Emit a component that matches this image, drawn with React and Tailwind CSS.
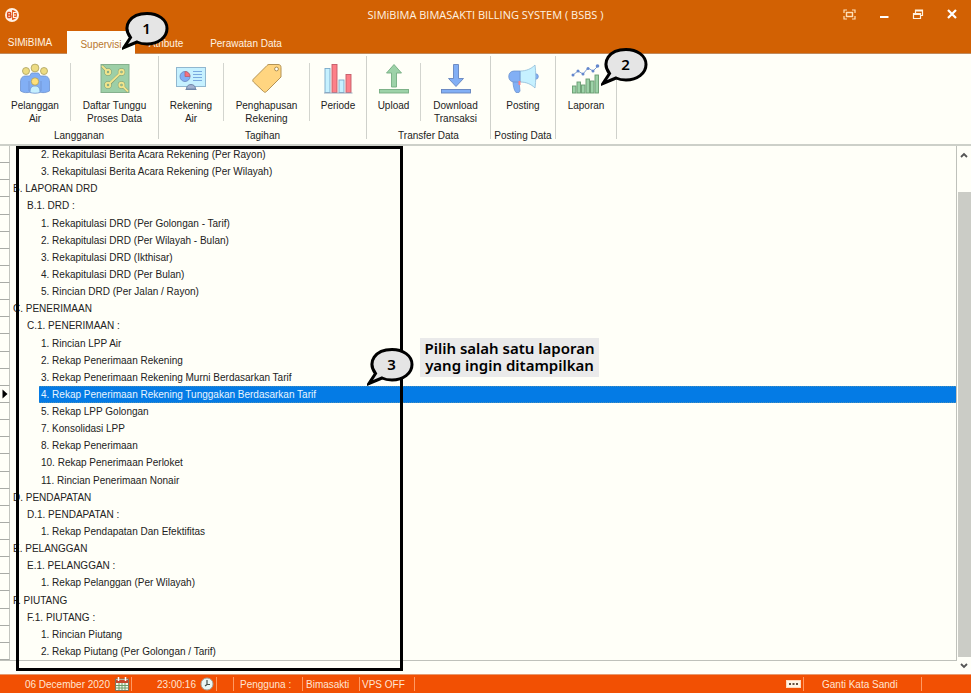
import { useState } from "react";

const TREE = [
  [2, "2. Rekapitulasi Berita Acara Rekening (Per Rayon)"],
  [2, "3. Rekapitulasi Berita Acara Rekening (Per Wilayah)"],
  [0, "B. LAPORAN DRD"],
  [1, "B.1. DRD :"],
  [2, "1. Rekapitulasi DRD (Per Golongan - Tarif)"],
  [2, "2. Rekapitulasi DRD (Per Wilayah - Bulan)"],
  [2, "3. Rekapitulasi DRD (Ikthisar)"],
  [2, "4. Rekapitulasi DRD (Per Bulan)"],
  [2, "5. Rincian DRD (Per Jalan / Rayon)"],
  [0, "C. PENERIMAAN"],
  [1, "C.1. PENERIMAAN :"],
  [2, "1. Rincian LPP Air"],
  [2, "2. Rekap Penerimaan Rekening"],
  [2, "3. Rekap Penerimaan Rekening Murni Berdasarkan Tarif"],
  [2, "4. Rekap Penerimaan Rekening Tunggakan Berdasarkan Tarif"],
  [2, "5. Rekap LPP Golongan"],
  [2, "7. Konsolidasi LPP"],
  [2, "8. Rekap Penerimaan"],
  [2, "10. Rekap Penerimaan Perloket"],
  [2, "11. Rincian Penerimaan Nonair"],
  [0, "D. PENDAPATAN"],
  [1, "D.1. PENDAPATAN :"],
  [2, "1. Rekap Pendapatan Dan Efektifitas"],
  [0, "E. PELANGGAN"],
  [1, "E.1. PELANGGAN :"],
  [2, "1. Rekap Pelanggan (Per Wilayah)"],
  [0, "F. PIUTANG"],
  [1, "F.1. PIUTANG :"],
  [2, "1. Rincian Piutang"],
  [2, "2. Rekap Piutang (Per Golongan / Tarif)"],
];

const INDENT = ["pl-[1px]", "pl-[15px]", "pl-[29px]"];

function PeopleIcon() {
  return (
    <svg width="32" height="32" viewBox="0 0 32 32" stroke="#6f93cf" strokeWidth="0.8">
      <path d="M1.500 28V19c0-4 2-6 5-6h4l2-3h7l2 3h4c3 0 5 2 5 6v9c-4 2-7 2-10 1H11.500c-3 1-7 1-10-1z" fill="#82aff5" />
      <path d="M10 28V18M22 28V18" fill="none" />
      <path d="M11 29.500c0-4 1-6.500 5-6.500s5 2.500 5 6.500c-3 1-7 1-10 0z" fill="#c5efff" />
      <g fill="#eddc83" stroke="#a9a05f">
        <circle cx="7" cy="8" r="3.500" />
        <circle cx="25" cy="8" r="3.500" />
        <circle cx="16" cy="5" r="3.900" />
        <circle cx="16" cy="18.500" r="3.700" fill="#ffe07a" />
      </g>
    </svg>
  );
}

function CircuitIcon() {
  return (
    <svg width="32" height="32" viewBox="0 0 32 32" fill="none">
      <rect x="2" y="1.500" width="28" height="28" fill="#9dcfa7" stroke="#85b08d" />
      <g stroke="#7d9a72" strokeWidth="3">
        <path d="M3 3l5 5M11 20.500L21 10.500M24.500 24l4.500 4.500" />
      </g>
      <g stroke="#7d9a72" strokeWidth="3">
        <circle cx="9" cy="9" r="2.200" /><circle cx="22.500" cy="9" r="2.200" />
        <circle cx="9" cy="22" r="2.200" /><circle cx="22.500" cy="22" r="2.200" />
      </g>
      <g stroke="#f0e58d" strokeWidth="2">
        <path d="M3 3l5 5M10.500 20.500L21 10.500M24 23.500l5 5" />
        <circle cx="9" cy="9" r="2.200" /><circle cx="22.500" cy="9" r="2.200" />
        <circle cx="9" cy="22" r="2.200" /><circle cx="22.500" cy="22" r="2.200" />
      </g>
    </svg>
  );
}

function BillIcon() {
  return (
    <svg width="32" height="32" viewBox="0 0 32 32" fill="none">
      <rect x="1.500" y="4.500" width="29" height="19" fill="#c6f1ff" stroke="#91b7cf" />
      <circle cx="10" cy="13.500" r="5" fill="#82aff5" stroke="#6584bd" strokeWidth="0.800" />
      <path d="M10 13.500v-5a5 5 0 0 1 5 5z" fill="#f86f7c" stroke="#b8606d" strokeWidth="0.800" />
      <path d="M18 8.500h9M18 11.500h9M18 14.500h9M18 17.500h9" stroke="#79a9df" />
      <path d="M10.500 26.500h11M11.500 26c0-3 2-4.500 4.500-4.500s4.500 1.500 4.500 4.500z" fill="#a2b2d0" stroke="#7188aa" />
    </svg>
  );
}

function TagIcon() {
  return (
    <svg width="32" height="32" viewBox="0 0 32 32">
      <path d="M18 1.500h9c2 0 3 1 3 3V14L15.500 28.500c-1 1-2 1-3 0L2.500 19c-1-1-1-2 0-3L16 2.500c.6-.7 1-1 2-1z" fill="#ffd580" stroke="#b39355" />
      <circle cx="25.500" cy="6" r="1.900" fill="#fffff8" stroke="#a98d54" />
    </svg>
  );
}

function PeriodIcon() {
  return (
    <svg width="32" height="32" viewBox="0 0 32 32" strokeWidth="0.900">
      <g fill="#c6f1ff" stroke="#79a9c9">
        <rect x="3" y="5.500" width="5" height="24" />
        <rect x="17" y="17" width="5" height="12.500" />
      </g>
      <g fill="#fd8088" stroke="#c45b68">
        <rect x="10" y="1.500" width="5" height="28" />
        <rect x="24" y="11.500" width="5" height="18" />
      </g>
      <path d="M2 30h28.500" stroke="#8ea0b8" />
    </svg>
  );
}

function UploadIcon() {
  return (
    <svg width="32" height="32" viewBox="0 0 32 32" fill="#9dd2a8" stroke="#75ad82" strokeWidth="0.900">
      <path d="M16 1.500L23.500 10h-5v14h-5V10h-5z" />
      <rect x="1.500" y="26.500" width="29" height="3.500" />
    </svg>
  );
}

function DownloadIcon() {
  return (
    <svg width="32" height="32" viewBox="0 0 32 32" fill="#82aff5" stroke="#6584bd" strokeWidth="0.900">
      <path d="M16 23.500l7.500-8h-5V1.500h-5v14h-5z" />
      <rect x="1.500" y="26.500" width="29" height="3.500" />
    </svg>
  );
}

function MegaphoneIcon() {
  return (
    <svg width="32" height="32" viewBox="0 0 32 32" strokeWidth="0.800">
      <circle cx="28.500" cy="13.500" r="2.800" fill="#82aff5" stroke="#6d94cf" />
      <path d="M13 8c6 0 11-2 15-6 1 7 1 16 0 23-4-4-9-6-15-6z" fill="#c6f1ff" stroke="#8fbbd8" />
      <path d="M6 18h6l1 10-1 1.500H9c-2-2-3-7-3-11.500z" fill="#82aff5" stroke="#6d94cf" />
      <path d="M13 8H7c-7 0-7 11 0 11h6z" fill="#82aff5" stroke="#6d94cf" />
      <path d="M11.500 18v4h2v-4z" fill="#f88088" stroke="none" />
    </svg>
  );
}

function ReportIcon() {
  return (
    <svg width="32" height="32" viewBox="0 0 32 32" strokeWidth="0.900">
      <path d="M3 12l5-4 5 3 5-6 5 3 5-5" fill="none" stroke="#7193cf" />
      <g fill="#6487cd">
        <circle cx="3" cy="12" r="1.500" /><circle cx="8" cy="8" r="1.500" />
        <circle cx="13" cy="11" r="1.500" /><circle cx="18" cy="5.500" r="1.500" />
        <circle cx="23" cy="8" r="1.500" /><circle cx="27.500" cy="3" r="1.800" />
      </g>
      <g fill="#9dd2a8" stroke="#679b70">
        <rect x="2.500" y="23" width="3.500" height="7" /><rect x="7" y="19" width="3.500" height="11" />
        <rect x="11.500" y="22" width="3.500" height="8" /><rect x="16" y="16" width="3.500" height="14" />
        <rect x="20.500" y="18" width="3.500" height="12" /><rect x="25" y="12" width="3.500" height="18" />
      </g>
    </svg>
  );
}

function Callout({ n }) {
  return (
    <div className="relative h-[40px] w-[47px]">
      <svg className="absolute inset-0" width="47" height="40" viewBox="0 0 47 40">
        <path
          d="M8.500 26.500C0 15 8 2.500 25 2.500c11 0 20 6 20 15s-9 15.500-20 15.500c-4 0-7-.5-10-2L2 36.500z"
          fill="#e5e5e5" stroke="#000" strokeWidth="3"
        />
      </svg>
      <span className="absolute inset-x-0 top-[7px] pl-[2px] text-center font-['Noto_Sans','Open_Sans',sans-serif] text-[15px] leading-[20px] font-semibold text-black">
        {n}
      </span>
    </div>
  );
}

function Tool({ icon, label, width }) {
  return (
    <button type="button" className={`flex flex-col items-center pt-[9px] ${width}`}>
      {icon}
      <span className="mt-[4px] text-center leading-[13px] whitespace-pre-line">{label}</span>
    </button>
  );
}

function Divider() {
  return <span className="mt-[9px] h-[58px] w-px bg-[#d3d5cf]" />;
}

function Group({ name, width, children }) {
  return (
    <section className={`mt-[2px] h-[83px] shrink-0 border-r border-[#cfd1cb] ${width}`}>
      <div className="-mt-[2px] flex h-[75px]">{children}</div>
      {name && <h2 className="h-[13px] text-center leading-[13px] whitespace-nowrap">{name}</h2>}
    </section>
  );
}

function Cell({ className, children }) {
  return (
    <div className={`flex h-[14px] items-center border-r border-[#ff9a63] whitespace-nowrap ${className}`}>
      {children}
    </div>
  );
}

export default function App() {
  const [selected, setSelected] = useState(14);
  return (
    <div className="relative flex h-screen min-h-[600px] flex-col overflow-hidden bg-[#fffff8] font-['Liberation_Sans',Arial,sans-serif] text-[10px] text-[#222]">
      <header className="shrink-0 border-b border-[#c08a5c] bg-[#d26103] text-[#fff3e2]">
        <div className="grid h-[31px] grid-cols-[1fr_auto_1fr] items-center pb-px">
          <svg className="ml-[4px]" width="16" height="16" viewBox="0 0 16 16">
            <circle cx="8" cy="8" r="7" fill="#fff0e4" />
            <path d="M8 3a5 5 0 0 1 0 10z" fill="#e35b1d" />
            <path d="M3.600 5.500v5M3.600 5.500h2.400c1 0 1 2.300 0 2.300h-2M4 8h2.200c1.200 0 1.200 2.500 0 2.500H3.600" fill="none" stroke="#dc4b1c" strokeWidth="1.300" />
            <path d="M12.500 5.500H9.500v5h3M9.500 8h2.500" fill="none" stroke="#fff0e4" strokeWidth="1.100" />
          </svg>
          <h1 className="font-['Open_Sans','Noto_Sans',sans-serif] text-[11px] leading-[16px]">
            SIMiBIMA BIMASAKTI BILLING SYSTEM ( BSBS )
          </h1>
          <div className="flex items-center justify-end gap-[18px] pr-[11px]">
            <button type="button" aria-label="Layar penuh" className="h-4 w-4">
              <svg width="16" height="16" viewBox="0 0 16 16" fill="none" stroke="#ffe0b8" strokeWidth="1.200">
                <path d="M2 6V3H5M10 3h3V6M13 9v3H10M5 12H2V9" />
                <rect x="4.500" y="5.500" width="6" height="4" strokeWidth="1.400" />
              </svg>
            </button>
            <button type="button" aria-label="Perkecil" className="h-4 w-4">
              <svg width="16" height="16" viewBox="0 0 16 16"><path d="M4 10h8.500" stroke="#fff" strokeWidth="2" /></svg>
            </button>
            <button type="button" aria-label="Pulihkan" className="h-4 w-4">
              <svg width="16" height="16" viewBox="0 0 16 16" fill="none" stroke="#fff3e2" strokeWidth="1.200">
                <path d="M3.500 6.500h7v5h-7zM3.500 7.500h7M5.500 6V3h7v5.500H11M5.500 3.800h7" />
              </svg>
            </button>
            <button type="button" aria-label="Tutup" className="h-4 w-4">
              <svg width="16" height="16" viewBox="0 0 16 16"><path d="M4 3l8 8M12 3l-8 8" stroke="#fff" strokeWidth="2.200" /></svg>
            </button>
          </div>
        </div>
        <nav className="flex h-[22px] items-stretch">
          <button type="button" className="w-[67px] pr-[7px]">SIMiBIMA</button>
          <button type="button" className="-mb-px w-[68px] bg-[#fffff8] pt-[3px] text-[#b9782f]">Supervisi</button>
          <button type="button" className="w-[62px] pt-[3px]">Atribute</button>
          <button type="button" className="w-[98px] pt-[3px]">Perawatan Data</button>
        </nav>
      </header>

      <div className="flex h-[92px] shrink-0 border-b-2 border-[#cdd0c9]">
        <Group name="Langganan" width="w-[159px]">
          <Tool icon={<PeopleIcon />} label={"Pelanggan\nAir"} width="w-[70px]" />
          <Divider />
          <Tool icon={<CircuitIcon />} label={"Daftar Tunggu\nProses Data"} width="w-[87px]" />
        </Group>
        <Group name="Tagihan" width="w-[208px]">
          <Tool icon={<BillIcon />} label={"Rekening\nAir"} width="w-[64px]" />
          <Divider />
          <Tool icon={<TagIcon />} label={"Penghapusan\nRekening"} width="w-[85px]" />
          <Divider />
          <Tool icon={<PeriodIcon />} label="Periode" width="w-[56px]" />
        </Group>
        <Group name="Transfer Data" width="w-[124px]">
          <Tool icon={<UploadIcon />} label="Upload" width="w-[53px]" />
          <Divider />
          <Tool icon={<DownloadIcon />} label={"Download\nTransaksi"} width="w-[69px]" />
        </Group>
        <Group name="Posting Data" width="w-[65px]">
          <Tool icon={<MegaphoneIcon />} label="Posting" width="w-[64px]" />
        </Group>
        <Group width="w-[61px]">
          <Tool icon={<ReportIcon />} label="Laporan" width="w-[60px]" />
        </Group>
      </div>

      <main className="relative flex min-h-0 flex-1">
        <div role="tree" aria-label="Daftar laporan" className="mb-[13px] grid min-w-0 flex-1 auto-rows-fr border-r border-b border-[#bfc1bb]">
          {TREE.map(([level, label], i) => (
            <div key={label + i} className="flex min-h-0">
              <span className="flex w-[10px] shrink-0 items-center border-r border-b border-r-[#c3c5bf] border-b-[#a9aba6]">
                {selected === i && (
                  <svg className="ml-[2px]" width="6" height="10" viewBox="0 0 6 10"><path d="M0.500 0.500v9L5.500 5z" fill="#000" /></svg>
                )}
              </span>
              <span className={`flex min-w-0 flex-1 ${INDENT[level]}`}>
                <button
                  type="button"
                  role="treeitem"
                  aria-selected={selected === i}
                  onClick={() => setSelected(i)}
                  className={`flex min-w-0 flex-1 items-center pl-[2px] text-left whitespace-nowrap ${
                    selected === i ? "border-y border-dotted border-[#4b8fb8] bg-[#047be5] text-[#e8f5ff]" : ""
                  }`}
                >
                  {label}
                </button>
              </span>
            </div>
          ))}
        </div>
        <div className="flex w-[14px] shrink-0 flex-col">
          <button type="button" aria-label="Gulir ke atas" className="flex h-[17px] shrink-0 items-center justify-center">
            <svg width="8" height="6" viewBox="0 0 8 6"><path d="M1 5l3-3 3 3" fill="none" stroke="#555" strokeWidth="1.800" /></svg>
          </button>
          <div className="mt-[29px] ml-px flex-1 bg-[#cbccc6]" />
          <button type="button" aria-label="Gulir ke bawah" className="flex h-[17px] shrink-0 items-center justify-center">
            <svg width="8" height="6" viewBox="0 0 8 6"><path d="M1 1l3 3 3-3" fill="none" stroke="#555" strokeWidth="1.800" /></svg>
          </button>
        </div>

        <div className="pointer-events-none absolute top-0 bottom-[3px] left-[16px] w-[387px] border-[3px] border-black" />
        <div className="pointer-events-none absolute top-[201px] left-[367px]"><Callout n="3" /></div>
        <p className="absolute top-[192px] left-[420px] w-[179px] bg-[#eaeaea] pt-[2px] pb-[3px] text-center font-['Noto_Sans','Open_Sans',sans-serif] text-[15px] leading-[17px] font-semibold whitespace-nowrap text-black">
          Pilih salah satu laporan
          <br />
          yang ingin ditampilkan
        </p>
      </main>

      <footer className="flex h-[19px] shrink-0 items-center border-t border-[#e79a70] bg-[#f25003] text-[#ffe4d2]">
        <Cell className="w-[132px] justify-end gap-[5px] pr-[2px]">
          06 December 2020
          <svg width="14" height="14" viewBox="0 0 14 14" className="shrink-0">
            <rect x="0.500" y="2" width="13" height="11.500" fill="#f2f5e8" stroke="#81735b" />
            <path d="M1 3h12v3H1z" fill="#c7462b" />
            <path d="M3.500 0v4M10.500 0v4" stroke="#fff" strokeWidth="1.500" />
            <path d="M1 8.500h12M1 11h12M4 6v7M7 6v7M10 6v7" stroke="#6d9b67" />
          </svg>
        </Cell>
        <Cell className="w-[85px] justify-end gap-[4px] pr-[2px]">
          23:00:16
          <svg width="14" height="14" viewBox="0 0 14 14">
            <circle cx="7" cy="7" r="6" fill="#e9f7f5" stroke="#a5a49c" />
            <path d="M7 3v4.500h3M7 7.500L5 9" fill="none" stroke="#46504c" strokeWidth="1.200" />
          </svg>
        </Cell>
        <Cell className="w-[17px]" />
        <Cell className="w-[69px] pl-[6px]">Pengguna :</Cell>
        <Cell className="w-[57px] pl-[3px]">Bimasakti</Cell>
        <Cell className="w-[55px] pl-[2px]">VPS OFF</Cell>
        <Cell className="min-w-0 flex-1 justify-end pr-[2px]">
          <svg width="15" height="8" viewBox="0 0 15 8">
            <rect x="0.500" y="0.500" width="14" height="7" fill="#fff5e5" stroke="#ffd9bd" />
            <path d="M3 4h9" stroke="#63503f" strokeWidth="2" strokeDasharray="2 1.500" />
          </svg>
        </Cell>
        <Cell className="w-[118px] pl-[18px]"><button type="button">Ganti Kata Sandi</button></Cell>
        <span className="w-[49px]" />
      </footer>

      <div className="pointer-events-none absolute top-[11px] left-[122px]"><Callout n="1" /></div>
      <div className="pointer-events-none absolute top-[47px] left-[601px]"><Callout n="2" /></div>
    </div>
  );
}
